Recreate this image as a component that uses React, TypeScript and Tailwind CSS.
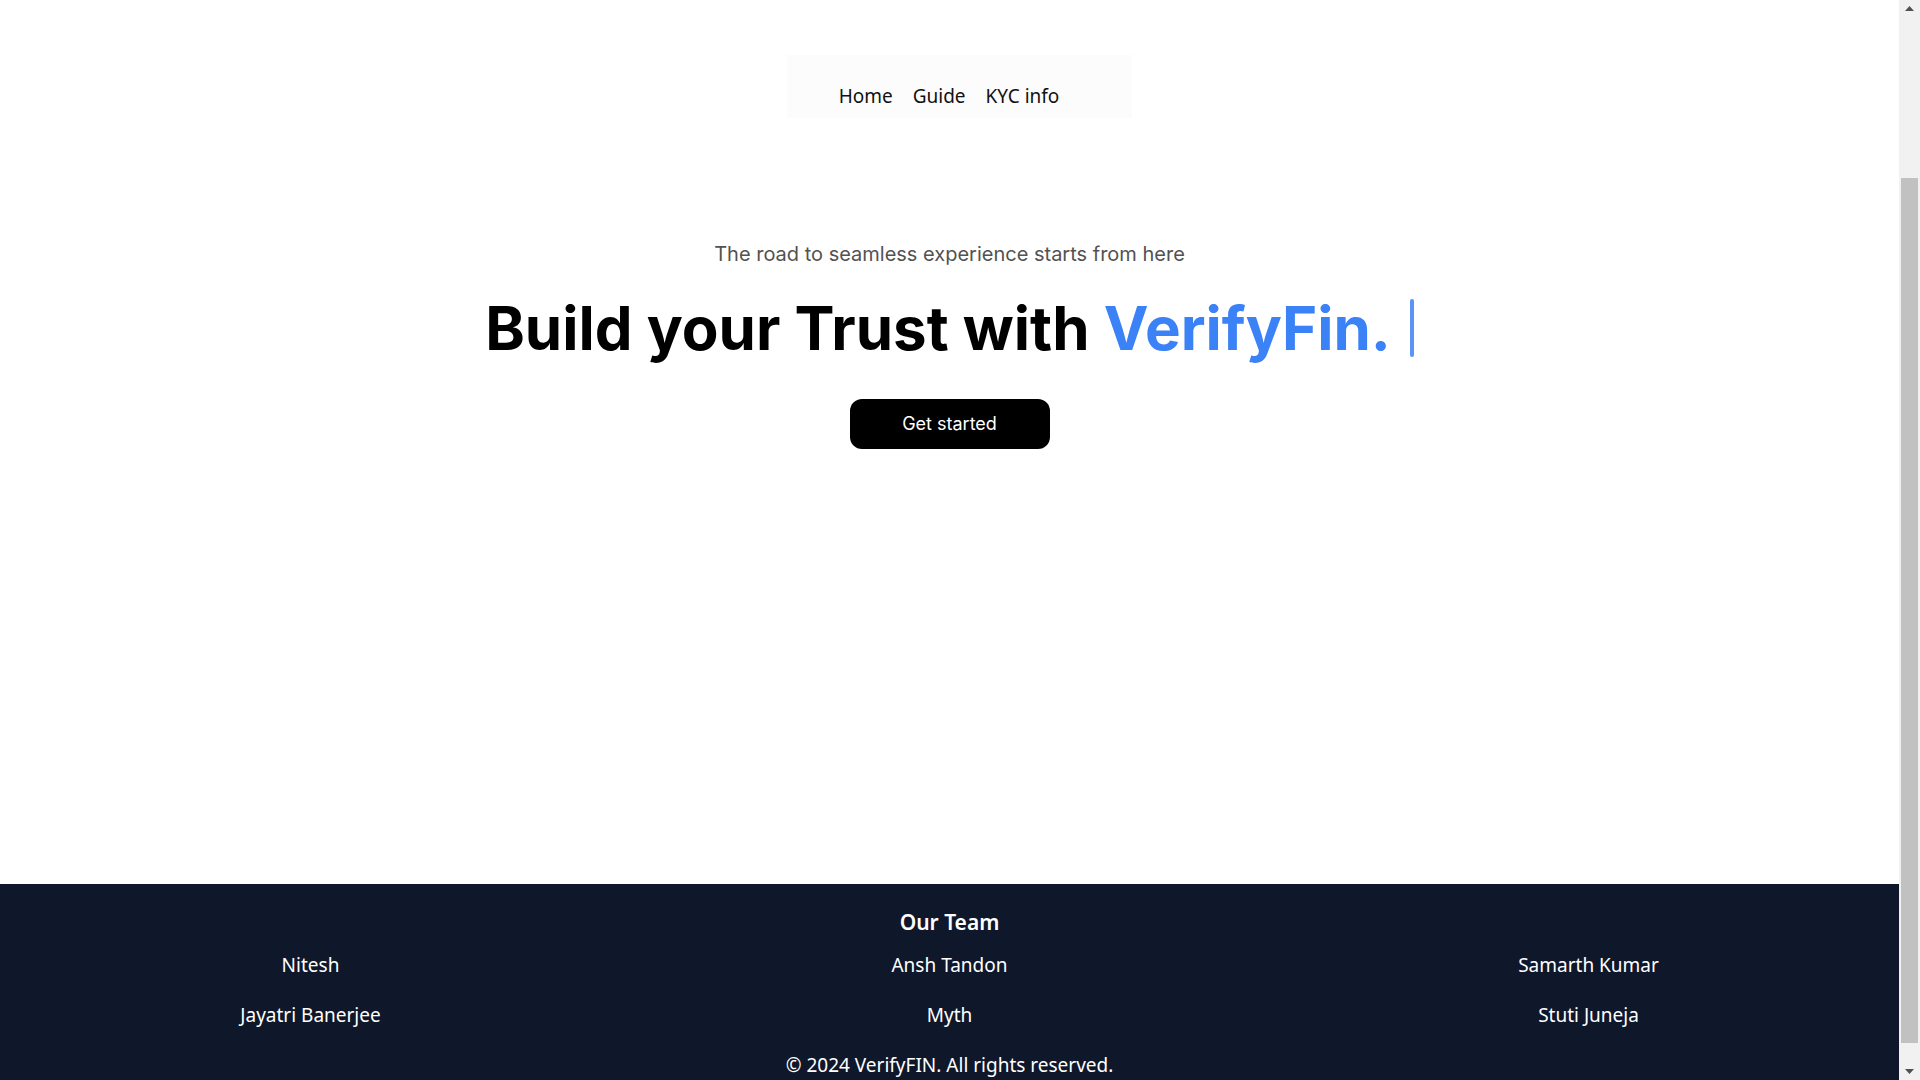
import React from 'react'

const team = ['Nitesh', 'Ansh Tandon', 'Samarth Kumar', 'Jayatri Banerjee', 'Myth', 'Stuti Juneja']

function Scrollbar() {
  return (
    <div className="w-[21px] shrink-0 h-full bg-[#f1f1f1] flex flex-col items-center">
      <div className="h-[17px] flex items-center justify-center">
        <svg width="9" height="5" viewBox="0 0 9 5">
          <path d="M0 5 L4.5 0 L9 5 Z" fill="#505050" />
        </svg>
      </div>
      <div className="mt-[161px] w-[17px] h-[865px] bg-[#c1c1c1]"></div>
      <div className="flex-1"></div>
      <div className="h-[17px] flex items-center justify-center">
        <svg width="9" height="5" viewBox="0 0 9 5">
          <path d="M0 0 L9 0 L4.5 5 Z" fill="#505050" />
        </svg>
      </div>
    </div>
  )
}

function App() {
  return (
    <div className="h-screen flex overflow-hidden bg-white font-['Noto_Sans',sans-serif]">
      <div className="flex-1 min-w-0">
        <div className="min-h-[884px] flex flex-col">
          <header className="flex justify-center pt-[55px]">
            <nav className="ml-[20px] h-[63px] bg-[#fcfcfc] pl-[52px] pr-[73px] pt-[27px] flex gap-[20px] text-[19px] leading-[28px] text-[#111]">
              <a href="#">Home</a>
              <a href="#">Guide</a>
              <a href="#">KYC info</a>
            </nav>
          </header>

          <main className="flex flex-col items-center pt-[122px] font-['Inter',sans-serif]">
            <p className="text-xl leading-[28px] text-[#525252]">The road to seamless experience starts from here</p>
            <h1 className="mt-[30px] text-6xl font-bold text-black flex items-center">
              <span>
                Build your Trust with <span className="text-[#3b82f6]">VerifyFin.</span>
              </span>
              <span className="ml-[19px] inline-block w-[4px] h-[58px] rounded-full bg-[#5b94f7]"></span>
            </h1>
            <button className="mt-[41px] w-[200px] h-[50px] rounded-xl bg-black text-white text-lg">
              Get started
            </button>
          </main>
        </div>

        <footer className="bg-[#0f172a] text-white pt-[24px] pb-[48px] flex flex-col items-center">
          <h2 className="text-[21px] leading-[28px] font-semibold">Our Team</h2>
          <div className="mt-[15px] w-full grid grid-cols-[repeat(3,639px)] justify-center gap-y-[22px] text-[19px] leading-[28px] text-center">
            {team.map((name) => (
              <p key={name}>{name}</p>
            ))}
          </div>
          <p className="mt-[22px] text-[19px] leading-[28px]">© 2024 VerifyFIN. All rights reserved.</p>
        </footer>
      </div>
      <Scrollbar />
    </div>
  )
}

export default App
